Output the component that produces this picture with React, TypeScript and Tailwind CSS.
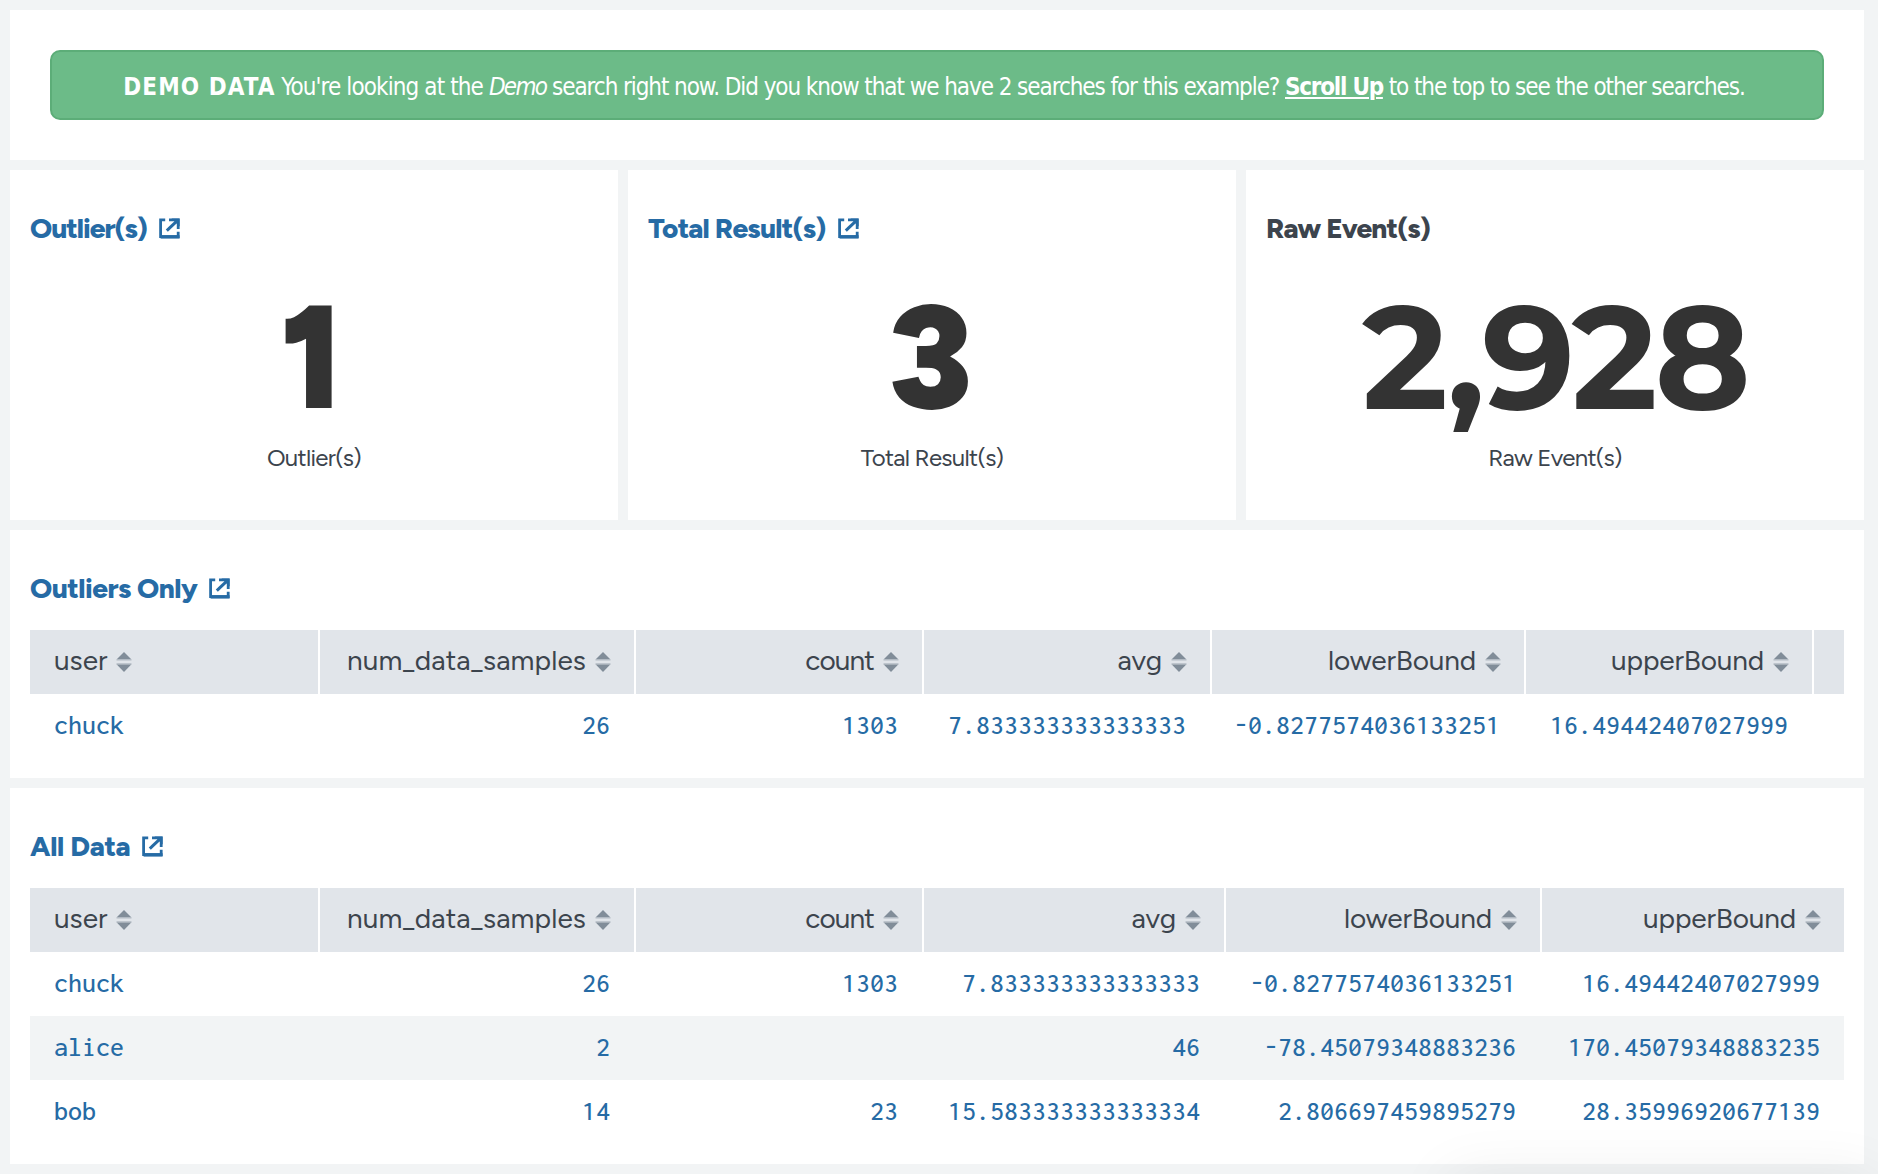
function ExternalIcon() {
  return (
    <svg width="21" height="21" viewBox="0 0 21 21" fill="none" stroke="currentColor" strokeWidth="2.8" className="shrink-0">
      <path d="M6.2 1.9H1.6V18.6H19.2V13.8" />
      <path d="M1.6 18.9H20.6" strokeWidth="3.4" stroke="currentColor" />
      <path d="M10 1.9H19.2V11" />
      <path d="M12.5 0.5H20.6V8.5Z" fill="currentColor" stroke="none" />
      <path d="M18.6 2.4L7.8 12.6" strokeWidth="3" />
    </svg>
  );
}

function SortIcon() {
  return (
    <svg width="16" height="20" viewBox="0 0 16 20" className="shrink-0">
      <path d="M8 0L15.5 7.6H0.5Z" fill="#818d99" />
      <path d="M8 20L15.5 12.2H0.5Z" fill="#818d99" />
      <path d="M0.5 7.4H15.5V8.6H0.5ZM0.5 11.2H15.5V12.4H0.5Z" fill="#b3bbc4" />
    </svg>
  );
}

function PanelTitle({ text, tracking, link = true }: { text: string; tracking: string; link?: boolean }) {
  return (
    <h2
      className={
        'flex items-center gap-3 text-[28px] leading-9 font-extrabold ' + (link ? 'text-[#266ba5] ' : 'text-[#3c444d] ') + tracking
      }
    >
      <span>{text}</span>
      {link && <ExternalIcon />}
    </h2>
  );
}

type SingleValueProps = { title: string; tracking: string; value: string; valueFont: string; link?: boolean };

function SingleValue({ title, tracking, value, valueFont, link = true }: SingleValueProps) {
  return (
    <section className="h-[350px] bg-white px-5 pt-10">
      <PanelTitle text={title} tracking={tracking} link={link} />
      <div className={'mt-[51px] text-center text-[146px] leading-[120px] text-[#333333] ' + valueFont}>{value}</div>
      <div className="mt-[25px] text-center text-[24px] leading-8 tracking-[-0.7px] text-[#3c444d]">{title}</div>
    </section>
  );
}

const columns = [
  { name: 'user', tracking: 'tracking-normal' },
  { name: 'num_data_samples', tracking: 'tracking-[0.1px]' },
  { name: 'count', tracking: 'tracking-[-0.9px]' },
  { name: 'avg', tracking: 'tracking-[-0.1px]' },
  { name: 'lowerBound', tracking: 'tracking-[-0.15px]' },
  { name: 'upperBound', tracking: 'tracking-[-0.15px]' },
];

type TableProps = { title: string; tracking: string; widths: string[]; rows: string[][]; spare?: boolean };

function DataTable({ title, tracking, widths, rows, spare = false }: TableProps) {
  return (
    <section className="bg-white px-5 pt-10 pb-5">
      <PanelTitle text={title} tracking={tracking} />
      <table className="mt-6 w-full table-fixed border-collapse">
        <colgroup>
          {widths.map((w, i) => (
            <col key={i} className={w} />
          ))}
        </colgroup>
        <thead>
          <tr className="h-16">
            {columns.map((c, i) => (
              <th key={c.name} className="p-0 font-normal">
                <div
                  className={
                    'flex h-16 items-center gap-[9px] bg-[#e1e5ea] pr-[23px] pl-6 text-[28px] text-[#3c444d] ' +
                    (i > 0 ? 'justify-end ' : '') +
                    (i < columns.length - 1 || spare ? 'mr-0.5' : '')
                  }
                >
                  <span className={'pb-1 leading-none ' + c.tracking}>{c.name}</span>
                  <SortIcon />
                </div>
              </th>
            ))}
            {spare && <th className="bg-[#e1e5ea] p-0" />}
          </tr>
        </thead>
        <tbody className="font-['Inconsolata','Noto_Sans_Mono_CJK_SC',monospace] text-[28px] font-medium text-[#266ba5]">
          {rows.map((r) => (
            <tr key={r[0]} className="h-16 even:bg-[#f2f4f5]">
              {r.map((v, i) => (
                <td
                  key={i}
                  className={
                    'pt-0 pb-[3px] leading-[61px] ' +
                    (i === 0 ? 'pl-6 text-left' : i < columns.length - 1 || spare ? 'pr-[26px] text-right' : 'pr-6 text-right')
                  }
                >
                  {v}
                </td>
              ))}
              {spare && <td />}
            </tr>
          ))}
        </tbody>
      </table>
    </section>
  );
}

const chuck = ['chuck', '26', '1303', '7.833333333333333', '-0.8277574036133251', '16.49442407027999'];

export default function App() {
  return (
    <div className="relative flex h-[1174px] w-[1878px] flex-col gap-2.5 overflow-hidden bg-[#f2f4f5] py-2.5 pr-3.5 pl-2.5 font-['Figtree','Inter',sans-serif]">
      <section className="bg-white p-10">
        <div className="flex h-[70px] items-center justify-center rounded-[10px] border-2 border-[#5cad78] bg-[#6cbb88] pt-[3px] pr-1.5 font-['DejaVu_Sans_Condensed','DejaVu_Sans',sans-serif] text-[24px] whitespace-nowrap text-white">
          <p className="tracking-[-1.08px]">
            <strong className="tracking-[1.1px]">DEMO DATA</strong> <span className="tracking-[-0.9px]">You're looking at the </span>
            <em className="tracking-[-1.7px]">Demo</em> search right now. Did you know that we have 2 searches for this example?{' '}
            <strong className="tracking-[-1.25px] underline decoration-2 underline-offset-2">Scroll Up</strong> to the top to see the other searches.
          </p>
        </div>
      </section>

      <div className="grid grid-cols-[608px_608px_618px] gap-2.5">
        <SingleValue title="Outlier(s)" tracking="tracking-[-1px]" value="1" valueFont="font-black pr-1" />
        <SingleValue title="Total Result(s)" tracking="tracking-[-0.75px]" value="3" valueFont="font-black pr-0.5" />
        <SingleValue
          title="Raw Event(s)"
          tracking="tracking-[-0.85px]"
          value="2,928"
          valueFont="font-['Montserrat','Figtree','Inter',sans-serif] font-bold tracking-[-3px]"
          link={false}
        />
      </div>

      <DataTable
        title="Outliers Only"
        tracking="tracking-[-0.5px]"
        spare
        widths={['w-[290px]', 'w-[316px]', 'w-[288px]', 'w-[288px]', 'w-[314px]', 'w-[288px]', 'w-[30px]']}
        rows={[chuck]}
      />

      <DataTable
        title="All Data"
        tracking="tracking-[-0.3px]"
        widths={['w-[290px]', 'w-[316px]', 'w-[288px]', 'w-[302px]', 'w-[316px]', 'w-[302px]']}
        rows={[
          chuck,
          ['alice', '2', '', '46', '-78.45079348883236', '170.45079348883235'],
          ['bob', '14', '23', '15.583333333333334', '2.806697459895279', '28.35996920677139'],
        ]}
      />

      {/* soft shadow of a floating bar just below the viewport */}
      <div className="pointer-events-none absolute top-[1176px] right-0 h-20 w-[430px] shadow-[0_0_60px_rgba(0,0,0,0.07)]" />
    </div>
  );
}
